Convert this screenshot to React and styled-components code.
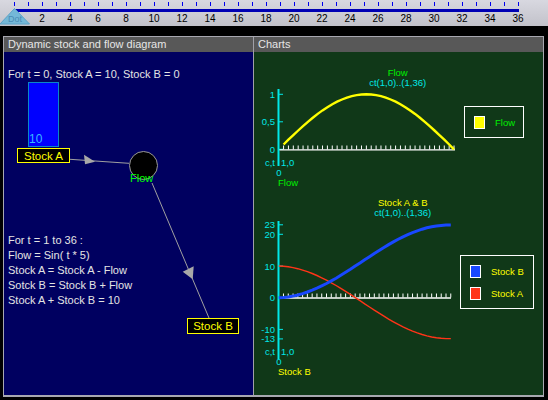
import React from "react";
import styled, { createGlobalStyle } from "styled-components";

const Global = createGlobalStyle`
  html, body { margin: 0; padding: 0; background: #000; overflow: hidden; }
  body { width: 548px; height: 400px; font-family: "Liberation Sans", Arial, sans-serif; }
`;

const Page = styled.div`
  width: 548px;
  height: 400px;
  background: #000;
  display: flex;
  flex-direction: column;
`;

/* ---------- top slider ---------- */
const Toolbar = styled.div`
  position: relative;
  height: 26px;
  flex: none;
  background: linear-gradient(#d8d8e0, #c2c2ca);
`;
const TickRow = styled.div`
  display: flex;
  height: 9px;
  box-sizing: border-box;
  padding: 2px 0 0 14px;
`;
const Tick = styled.span`
  flex: none;
  width: 14px;
  &::before {
    content: "";
    display: block;
    width: 1px;
    height: 4px;
    background: #0000ee;
  }
`;
const Track = styled.div`
  margin-left: 14px;
  width: 505px;
  height: 3px;
  background: #0000b4;
`;
const NumberRow = styled.div`
  display: flex;
  padding-left: 28px;
  height: 14px;
  font-size: 10px;
  line-height: 14px;
  color: #000;
`;
const Num = styled.span`
  flex: none;
  width: 28px;
  text-align: center;
`;
const Thumb = styled.svg`
  position: absolute;
  left: 0;
  top: 8px;
`;

const Gap = styled.div`
  height: 10px;
  flex: none;
`;

/* ---------- frame ---------- */
const Frame = styled.div`
  margin-left: 3px;
  width: 541px;
  box-sizing: border-box;
  border: 1px solid #a8a8b0;
  border-bottom-width: 2px;
  display: flex;
`;
const Panel = styled.div`
  display: flex;
  flex-direction: column;
  width: ${(p) => p.$w}px;
  box-sizing: border-box;
  ${(p) => (p.$divider ? "border-left: 1px solid #a0a0a8;" : "")}
`;
const PanelHeader = styled.div`
  height: 15px;
  background: #585858;
  color: #e6e6e6;
  font-size: 11px;
  line-height: 15px;
  padding-left: 4px;
  white-space: nowrap;
`;

/* ---------- diagram ---------- */
const Diagram = styled.div`
  position: relative;
  height: 343px;
  background: #000060;
  color: #e4e4e4;
  font-size: 11px;
  padding: 15px 0 0 4px;
  box-sizing: border-box;
`;
const Caption = styled.div`
  line-height: 14px;
  white-space: nowrap;
`;
const Formula = styled.div`
  margin-top: 152px;
  line-height: 15px;
  white-space: nowrap;
`;
const Connectors = styled.svg`
  position: absolute;
  left: 0;
  top: 0;
`;
const Level = styled.div`
  position: absolute;
  left: ${(p) => p.$x}px;
  top: ${(p) => p.$y}px;
  width: 31px;
  height: 65px;
  box-sizing: border-box;
  background: #0000ff;
  border: 1px solid #0a86c8;
  display: flex;
  align-items: flex-end;
  color: #38b8ff;
  font-size: 12px;
  line-height: 13px;
`;
const StockBox = styled.div`
  position: absolute;
  left: ${(p) => p.$x}px;
  top: ${(p) => p.$y}px;
  width: ${(p) => p.$w}px;
  height: ${(p) => p.$h}px;
  box-sizing: border-box;
  background: #000;
  border: 1px solid #ffff00;
  color: #ffff00;
  font-size: 11.5px;
  display: flex;
  align-items: center;
  justify-content: center;
`;
const Valve = styled.div`
  position: absolute;
  left: ${(p) => p.$x}px;
  top: ${(p) => p.$y}px;
  width: 29px;
  height: 29px;
  box-sizing: border-box;
  border-radius: 50%;
  background: #000;
  border: 1px solid #9a9a9a;
`;
const ValveLabel = styled.span`
  position: absolute;
  left: ${(p) => p.$x}px;
  top: ${(p) => p.$y}px;
  color: #00ff00;
  font-size: 11px;
  line-height: 11px;
`;

/* ---------- charts ---------- */
const ChartsBody = styled.div`
  height: 343px;
  background: #103818;
  display: flex;
  flex-direction: column;
`;
const ChartBlock = styled.div`
  display: flex;
  height: ${(p) => p.$h}px;
  flex: none;
`;
const Legend = styled.div`
  margin-top: ${(p) => p.$top}px;
  width: ${(p) => p.$w}px;
  height: ${(p) => p.$h}px;
  box-sizing: border-box;
  border: 1px solid #ffffff;
  display: flex;
  flex-direction: column;
  gap: 9px;
  padding: 9px 0 0 9px;
`;
const LegendRow = styled.div`
  display: flex;
  align-items: center;
  gap: 10px;
  height: 13px;
`;
const Swatch = styled.span`
  flex: none;
  width: 11px;
  height: 13px;
  box-sizing: border-box;
  border: 1px solid #ffffff;
  background: ${(p) => p.$c};
`;
const LegendLabel = styled.span`
  color: ${(p) => p.$c};
  font-size: 9.5px;
  white-space: nowrap;
`;

const CYAN = "#00e8e8";
const YELLOW = "#ffff00";
const GREEN = "#00ee00";
const BLUE = "#1848ff";
const RED = "#ff3418";
const rad = (d) => (d * Math.PI) / 180;
const T36 = Array.from({ length: 36 }, (_, i) => i + 1);

const flowVals = T36.map((t) => Math.sin(rad(t * 5)));
const stockB = [0];
T36.forEach((t) => stockB.push(stockB[stockB.length - 1] + Math.sin(rad(t * 5))));

function FlowChart() {
  const tx = (t) => 24.7 + t * 4.87;
  const ty = (v) => 97.3 - v * 55;
  const pts = T36.map((t, i) => `${tx(t).toFixed(1)},${ty(flowVals[i]).toFixed(1)}`).join(" ");
  return (
    <svg width="210" height="140" style={{ flex: "none" }} fontFamily="Liberation Sans, Arial, sans-serif" fontSize="9.5">
      <text x="143.7" y="24" fill={GREEN} textAnchor="middle">Flow</text>
      <text x="143.7" y="34" fill={CYAN} textAnchor="middle">ct(1,0)..(1,36)</text>
      <line x1="24.5" y1="37" x2="24.5" y2="114" stroke={CYAN} strokeWidth="2" />
      {[[1, "1"], [0.5, "0,5"], [0, "0"]].map(([v, l]) => (
        <g key={l}>
          <line x1="25" y1={ty(v)} x2="29" y2={ty(v)} stroke={CYAN} strokeWidth="1" />
          <text x="21" y={ty(v) + 3.5} fill={CYAN} textAnchor="end">{l}</text>
        </g>
      ))}
      <line x1="25.5" y1="97.8" x2="201" y2="97.8" stroke="#fff" strokeWidth="1.3" />
      {T36.map((t) => (
        <line key={t} x1={tx(t)} y1="93.5" x2={tx(t)} y2="97.5" stroke="#fff" strokeWidth="1" />
      ))}
      <polyline points={pts} fill="none" stroke={YELLOW} strokeWidth="2.4" />
      <text x="21" y="114" fill={CYAN} textAnchor="end">c,t</text>
      <text x="27" y="114" fill={CYAN}>1,0</text>
      <text x="25" y="124" fill={CYAN} textAnchor="middle">0</text>
      <text x="24" y="134" fill={GREEN}>Flow</text>
    </svg>
  );
}

function StockChart() {
  const tx = (t) => 24.7 + t * 4.78;
  const ty = (v) => 105.7 - v * 3.17;
  const bPts = stockB.map((v, t) => `${tx(t).toFixed(1)},${ty(v).toFixed(1)}`).join(" ");
  const aPts = stockB.map((v, t) => `${tx(t).toFixed(1)},${ty(10 - v).toFixed(1)}`).join(" ");
  return (
    <svg width="206" height="203" style={{ flex: "none" }} fontFamily="Liberation Sans, Arial, sans-serif" fontSize="9.5">
      <text x="148.7" y="14" fill={YELLOW} textAnchor="middle">Stock A &amp; B</text>
      <text x="148.7" y="24" fill={CYAN} textAnchor="middle">ct(1,0)..(1,36)</text>
      <line x1="24.5" y1="29" x2="24.5" y2="167" stroke={CYAN} strokeWidth="2" />
      {[23, 20, 10, 0, -10, -13].map((v) => (
        <g key={v}>
          <line x1="25" y1={ty(v)} x2="29" y2={ty(v)} stroke={CYAN} strokeWidth="1" />
          <text x="21" y={ty(v) + 3.5} fill={CYAN} textAnchor="end">{v}</text>
        </g>
      ))}
      <line x1="25.5" y1="106" x2="197" y2="106" stroke="#fff" strokeWidth="1.3" />
      {T36.map((t) => (
        <line key={t} x1={tx(t)} y1="101.5" x2={tx(t)} y2="105.5" stroke="#fff" strokeWidth="1" />
      ))}
      <polyline points={aPts} fill="none" stroke={RED} strokeWidth="1.4" />
      <polyline points={bPts} fill="none" stroke={BLUE} strokeWidth="3" />
      <text x="21" y="163" fill={CYAN} textAnchor="end">c,t</text>
      <text x="27" y="163" fill={CYAN}>1,0</text>
      <text x="25" y="173" fill={CYAN} textAnchor="middle">0</text>
      <text x="24" y="183" fill={YELLOW}>Stock B</text>
    </svg>
  );
}

export default function App() {
  const ticks = Array.from({ length: 37 }, (_, i) => i);
  const nums = Array.from({ length: 18 }, (_, i) => (i + 1) * 2);
  return (
    <Page>
      <Global />
      <Toolbar>
        <TickRow>
          {ticks.map((t) => (
            <Tick key={t} />
          ))}
        </TickRow>
        <Track />
        <NumberRow>
          {nums.map((n) => (
            <Num key={n}>{n}</Num>
          ))}
        </NumberRow>
        <Thumb width="30" height="17" viewBox="0 0 30 17">
          <polygon points="14.5,0.5 0,16 29.5,16" fill="#74b8d8" stroke="#5aa2c8" strokeWidth="1" />
          <text x="15" y="14" textAnchor="middle" fontSize="9" fill="#4a8cb4" fontFamily="Liberation Sans, Arial, sans-serif">Dot</text>
        </Thumb>
      </Toolbar>
      <Gap />
      <Frame>
        <Panel $w={249}>
          <PanelHeader>Dynamic stock and flow diagram</PanelHeader>
          <Diagram>
            <Caption>For t = 0, Stock A = 10, Stock B = 0</Caption>
            <Formula>
              <div>For t = 1 to 36 :</div>
              <div>Flow = Sin( t * 5)</div>
              <div>Stock A = Stock A - Flow</div>
              <div>Sotck B = Stock B + Flow</div>
              <div>Stock A + Stock B = 10</div>
            </Formula>
            <Connectors width="249" height="343">
              <line x1="66" y1="107.3" x2="125" y2="111.3" stroke="#a0a0a0" strokeWidth="1" />
              <polygon points="80,102.7 81,112.3 91,109.7" fill="#a8a8a8" />
              <line x1="148" y1="131" x2="205" y2="266" stroke="#a0a0a0" strokeWidth="1" />
              <polygon points="178.7,219.7 189.7,214.3 188.7,227.3" fill="#a8a8a8" />
            </Connectors>
            <Level $x={24} $y={30}>10</Level>
            <StockBox $x={13} $y={96} $w={53} $h={15}>Stock A</StockBox>
            <Valve $x={125} $y={99} />
            <ValveLabel $x={126} $y={121}>Flow</ValveLabel>
            <StockBox $x={183} $y={266} $w={52} $h={16}>Stock B</StockBox>
          </Diagram>
        </Panel>
        <Panel $w={290} $divider>
          <PanelHeader>Charts</PanelHeader>
          <ChartsBody>
            <ChartBlock $h={140}>
              <FlowChart />
              <Legend $top={54} $w={60} $h={32}>
                <LegendRow>
                  <Swatch $c={YELLOW} />
                  <LegendLabel $c={GREEN}>Flow</LegendLabel>
                </LegendRow>
              </Legend>
            </ChartBlock>
            <ChartBlock $h={203}>
              <StockChart />
              <Legend $top={63} $w={74} $h={54}>
                <LegendRow>
                  <Swatch $c={BLUE} />
                  <LegendLabel $c={YELLOW}>Stock B</LegendLabel>
                </LegendRow>
                <LegendRow>
                  <Swatch $c={RED} />
                  <LegendLabel $c={YELLOW}>Stock A</LegendLabel>
                </LegendRow>
              </Legend>
            </ChartBlock>
          </ChartsBody>
        </Panel>
      </Frame>
    </Page>
  );
}
